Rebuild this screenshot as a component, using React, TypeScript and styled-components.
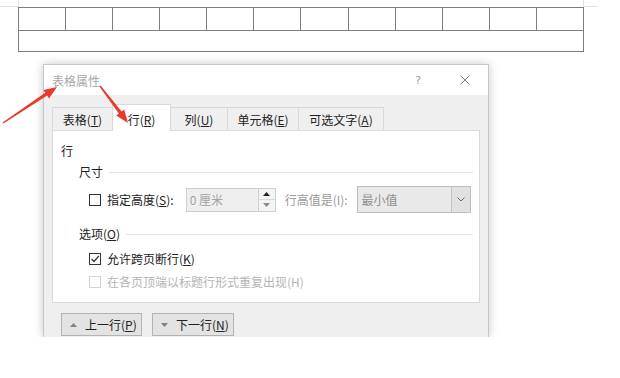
import styled, { createGlobalStyle } from "styled-components"

const GlobalStyle = createGlobalStyle`
  html, body {
    margin: 0;
    padding: 0;
    background: #fff;
  }
  body {
    font-family: "Noto Sans CJK SC", "Microsoft YaHei", sans-serif;
    font-size: 12px;
    color: #222;
  }
`

const Page = styled.div`
  position: relative;
  width: 620px;
  height: 378px;
  overflow: hidden;
  background: #fff;
`

// page corner marks above the table
const MarginMarks = styled.div`
  display: flex;
  height: 7px;
`
const MarkSide = styled.div<{ $w: number }>`
  width: ${(p) => p.$w}px;
  box-sizing: border-box;
  border-bottom: 1px solid #e3e3e3;
`
const MarkGap = styled.div`
  width: 566px;
  box-sizing: border-box;
  border-left: 1px solid #e3e3e3;
  border-right: 1px solid #e3e3e3;
`

const Grid = styled.table`
  margin-left: 18px;
  width: 566px;
  border-collapse: collapse;
  table-layout: fixed;
  td {
    border: 1px solid #7d7d7d;
    padding: 0;
  }
`
const GridRow = styled.tr<{ $h: number }>`
  height: ${(p) => p.$h}px;
`

const Dialog = styled.div`
  margin: 12px 0 0 43px;
  width: 446px;
  height: 273px;
  box-sizing: border-box;
  border: 1px solid #c6c6c6;
  border-bottom: none;
  background: #efefef;
  box-shadow: 0 0 9px rgba(0, 0, 0, 0.22);
  clip-path: inset(-14px -14px 0 -14px);
  display: flex;
  flex-direction: column;
  overflow: hidden;
`

const TitleBar = styled.div`
  height: 30px;
  flex: none;
  background: #fff;
  display: flex;
  align-items: center;
  padding-left: 8px;
`
const Title = styled.div`
  color: #a8a8a8;
  font-size: 12px;
`
const Help = styled.div`
  margin-left: auto;
  margin-right: 39px;
  color: #a0a0a0;
  font-family: "DejaVu Sans", sans-serif;
  font-size: 11px;
`
const Close = styled.div`
  width: 10px;
  height: 10px;
  margin-right: 18px;
  display: flex;
`

const Body = styled.div`
  flex: 1;
  padding: 9px 8px 0 8px;
`

const TabStrip = styled.div`
  display: flex;
  align-items: flex-end;
  height: 26px;
`
const Tab = styled.div<{ $w: number; $active?: boolean }>`
  position: relative;
  z-index: ${(p) => (p.$active ? 2 : 1)};
  width: ${(p) => p.$w}px;
  height: ${(p) => (p.$active ? 27 : 23)}px;
  margin-right: -1px;
  margin-bottom: ${(p) => (p.$active ? -1 : 0)}px;
  padding-top: ${(p) => (p.$active ? 2 : 0)}px;
  box-sizing: border-box;
  border: 1px solid #d9d9d9;
  border-bottom: none;
  background: ${(p) => (p.$active ? "#fff" : "#efefef")};
  display: flex;
  align-items: center;
  justify-content: center;
  color: #222;
  white-space: nowrap;
`

const Panel = styled.div`
  position: relative;
  z-index: 1;
  background: #fff;
  border: 1px solid #d9d9d9;
  padding: 12px 6px 12px 8px;
`
const Heading = styled.div`
  line-height: 16px;
`
const Group = styled.div<{ $top: number }>`
  display: flex;
  align-items: center;
  margin: ${(p) => p.$top}px 0 0 18px;
  line-height: 16px;
  &::after {
    content: "";
    flex: 1;
    margin-left: 6px;
    border-top: 1px solid #e4e4e4;
  }
`
const FieldRow = styled.div<{ $top: number }>`
  display: flex;
  align-items: center;
  margin: ${(p) => p.$top}px 0 0 28px;
  line-height: 16px;
`
const Box = styled.div<{ $disabled?: boolean }>`
  width: 12px;
  height: 12px;
  box-sizing: border-box;
  border: 1px solid ${(p) => (p.$disabled ? "#d4d4d4" : "#333")};
  background: #fff;
  display: flex;
  align-items: center;
  justify-content: center;
  flex: none;
`
const Label = styled.span<{ $muted?: boolean }>`
  margin-left: 6px;
  color: ${(p) => (p.$muted ? "#b4b4b4" : "#222")};
  white-space: nowrap;
`
const SideLabel = styled.span`
  margin-left: 9px;
  color: #999;
  white-space: nowrap;
`

const SpinField = styled.div`
  display: flex;
  width: 90px;
  height: 24px;
  margin-left: 12px;
  box-sizing: border-box;
  border: 1px solid #d0d0d0;
  background: #efefef;
`
const SpinText = styled.div`
  flex: 1;
  padding-left: 3px;
  line-height: 22px;
  color: #a3a3a3;
`
const SpinButtons = styled.div`
  width: 16px;
  display: flex;
  flex-direction: column;
  border-left: 1px solid #d0d0d0;
  background: #f4f4f4;
`
const SpinHalf = styled.div`
  flex: 1;
  display: flex;
  align-items: center;
  justify-content: center;
  & + & {
    border-top: 1px solid #dadada;
  }
`

const Select = styled.div`
  display: flex;
  width: 114px;
  height: 27px;
  margin-left: 9px;
  box-sizing: border-box;
  border: 1px solid #bdbdbd;
  background: #e9e9e9;
`
const SelectText = styled.div`
  flex: 1;
  padding-left: 4px;
  line-height: 25px;
  color: #8e8e8e;
`
const SelectArrow = styled.div`
  width: 18px;
  border-left: 1px solid #c4c4c4;
  background: #e1e1e1;
  display: flex;
  align-items: center;
  justify-content: center;
`

const ButtonRow = styled.div`
  display: flex;
  gap: 10px;
  margin: 10px 0 0 9px;
`
const NavButton = styled.div<{ $w: number }>`
  width: ${(p) => p.$w}px;
  height: 23px;
  box-sizing: border-box;
  border: 1px solid #b3b3b3;
  background: #e3e3e3;
  display: flex;
  align-items: center;
  padding-left: 8px;
  gap: 8px;
  white-space: nowrap;
`

const Overlay = styled.svg`
  position: absolute;
  left: 0;
  top: 0;
  pointer-events: none;
`

const Tri = ({ up, color }: { up?: boolean; color: string }) => (
  <svg width="7" height="4" viewBox="0 0 7 4">
    <path d={up ? "M0 4 L3.5 0 L7 4 Z" : "M0 0 L3.5 4 L7 0 Z"} fill={color} />
  </svg>
)

const Check = () => (
  <svg width="10" height="10" viewBox="0 0 10 10">
    <path d="M1.5 5 L4 7.5 L8.8 2" fill="none" stroke="#333" strokeWidth="1.2" />
  </svg>
)

export default function App() {
  return (
    <Page>
      <GlobalStyle />
      <MarginMarks>
        <MarkSide $w={18} />
        <MarkGap />
        <MarkSide $w={14} />
      </MarginMarks>
      <Grid>
        <tbody>
          <GridRow $h={23}>
            {Array.from({ length: 12 }).map((_, i) => (
              <td key={i} />
            ))}
          </GridRow>
          <GridRow $h={21}>
            <td colSpan={12} />
          </GridRow>
        </tbody>
      </Grid>

      <Dialog>
        <TitleBar>
          <Title>表格属性</Title>
          <Help>?</Help>
          <Close>
            <svg width="10" height="10" viewBox="0 0 10 10">
              <path d="M0.5 0.5 L9.5 9.5 M9.5 0.5 L0.5 9.5" stroke="#7a7a7a" strokeWidth="1" />
            </svg>
          </Close>
        </TitleBar>
        <Body>
          <TabStrip>
            <Tab $w={61}>表格(<u>T</u>)</Tab>
            <Tab $w={59} $active>行(<u>R</u>)</Tab>
            <Tab $w={58}>列(<u>U</u>)</Tab>
            <Tab $w={72}>单元格(<u>E</u>)</Tab>
            <Tab $w={86}>可选文字(<u>A</u>)</Tab>
          </TabStrip>
          <Panel>
            <Heading>行</Heading>
            <Group $top={5}>尺寸</Group>
            <FieldRow $top={6}>
              <Box />
              <Label>指定高度(<u>S</u>):</Label>
              <SpinField>
                <SpinText>0 厘米</SpinText>
                <SpinButtons>
                  <SpinHalf>
                    <Tri up color="#222" />
                  </SpinHalf>
                  <SpinHalf>
                    <Tri color="#8a8a8a" />
                  </SpinHalf>
                </SpinButtons>
              </SpinField>
              <SideLabel>行高值是(I):</SideLabel>
              <Select>
                <SelectText>最小值</SelectText>
                <SelectArrow>
                  <svg width="8" height="5" viewBox="0 0 8 5">
                    <path d="M0.5 0.5 L4 4 L7.5 0.5" fill="none" stroke="#666" strokeWidth="1" />
                  </svg>
                </SelectArrow>
              </Select>
            </FieldRow>
            <Group $top={13}>
              选项(<u>O</u>)
            </Group>
            <FieldRow $top={9}>
              <Box>
                <Check />
              </Box>
              <Label>允许跨页断行(<u>K</u>)</Label>
            </FieldRow>
            <FieldRow $top={7}>
              <Box $disabled />
              <Label $muted>在各页顶端以标题行形式重复出现(H)</Label>
            </FieldRow>
          </Panel>
          <ButtonRow>
            <NavButton $w={81}>
              <Tri up color="#808080" />
              <span>上一行(<u>P</u>)</span>
            </NavButton>
            <NavButton $w={82}>
              <Tri color="#808080" />
              <span>下一行(<u>N</u>)</span>
            </NavButton>
          </ButtonRow>
        </Body>
      </Dialog>

      <Overlay width="620" height="378" viewBox="0 0 620 378">
        <polygon
          points="57,87 49,98.4 47.2,95.6 3.4,123.6 2.6,122.4 45.2,92.7 43.4,90"
          fill="#e8392e"
        />
        <polygon
          points="128,123 116.2,115.6 118.8,113.4 99.4,86.4 100.6,85.6 121.6,111.5 124.2,109.6"
          fill="#e8392e"
        />
      </Overlay>
    </Page>
  )
}
